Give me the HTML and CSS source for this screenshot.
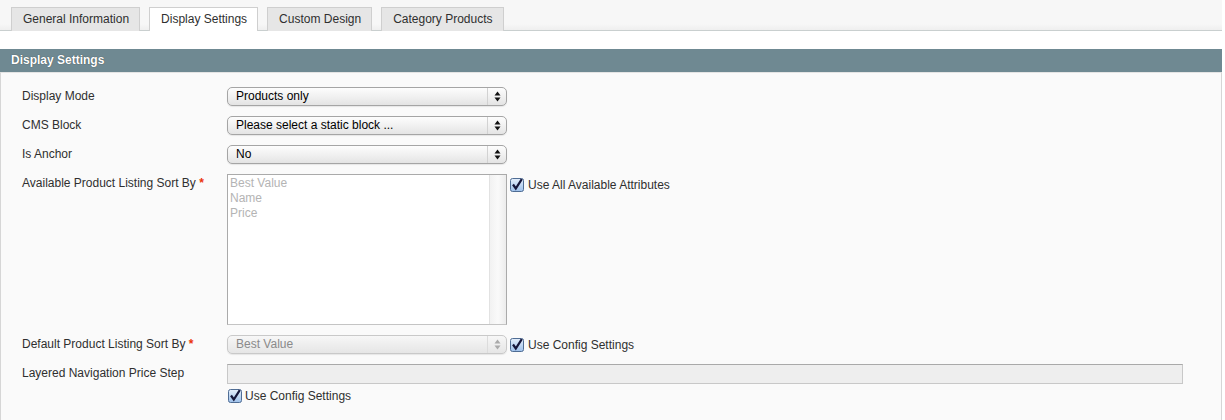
FILE: index.html
```html
<!DOCTYPE html>
<html lang="en">
<head>
    <meta charset="UTF-8">
    <title>Category - Display Settings</title>
    <link rel="stylesheet" href="styles.css">
</head>
<body>
    <div class="tab-bar">
        <ul class="tabs">
            <li class="tab">General Information</li>
            <li class="tab active">Display Settings</li>
            <li class="tab">Custom Design</li>
            <li class="tab">Category Products</li>
        </ul>
    </div>

    <div class="section-head">Display Settings</div>

    <div class="fieldset">
        <div class="form-row">
            <div class="label">Display Mode</div>
            <div class="value">
                <div class="select"><span class="select-text">Products only</span><span class="select-arrow"><svg width="7" height="11" viewBox="0 0 7 11"><path d="M3.5 0.5 L6.5 4.5 H0.5 Z M3.5 10.5 L6.5 6.5 H0.5 Z" fill="#111"/></svg></span></div>
            </div>
        </div>
        <div class="form-row">
            <div class="label">CMS Block</div>
            <div class="value">
                <div class="select"><span class="select-text">Please select a static block ...</span><span class="select-arrow"><svg width="7" height="11" viewBox="0 0 7 11"><path d="M3.5 0.5 L6.5 4.5 H0.5 Z M3.5 10.5 L6.5 6.5 H0.5 Z" fill="#111"/></svg></span></div>
            </div>
        </div>
        <div class="form-row">
            <div class="label">Is Anchor</div>
            <div class="value">
                <div class="select"><span class="select-text">No</span><span class="select-arrow"><svg width="7" height="11" viewBox="0 0 7 11"><path d="M3.5 0.5 L6.5 4.5 H0.5 Z M3.5 10.5 L6.5 6.5 H0.5 Z" fill="#111"/></svg></span></div>
            </div>
        </div>
        <div class="form-row">
            <div class="label">Available Product Listing Sort By <span class="required">*</span></div>
            <div class="value">
                <div class="multiselect">
                    <ul class="options">
                        <li>Best Value</li>
                        <li>Name</li>
                        <li>Price</li>
                    </ul>
                    <div class="scroll-track"></div>
                </div>
                <label class="check">
                    <svg class="checkbox" width="14" height="14" viewBox="0 0 14 14"><defs><linearGradient id="cb1" x1="0" y1="0" x2="0" y2="1"><stop offset="0" stop-color="#e4eefb"/><stop offset="1" stop-color="#9dc0ea"/></linearGradient></defs><rect x="0.5" y="0.5" width="13" height="13" rx="2" fill="url(#cb1)" stroke="#4f6d94"/><path d="M3 6.5 L5.8 10.5 L11.8 1.2" fill="none" stroke="#15163a" stroke-width="2.2"/></svg>
                    Use All Available Attributes
                </label>
            </div>
        </div>
        <div class="form-row">
            <div class="label">Default Product Listing Sort By <span class="required">*</span></div>
            <div class="value">
                <div class="select disabled"><span class="select-text">Best Value</span><span class="select-arrow"><svg width="7" height="11" viewBox="0 0 7 11"><path d="M3.5 0.5 L6.5 4.5 H0.5 Z M3.5 10.5 L6.5 6.5 H0.5 Z" fill="#aaa"/></svg></span></div>
                <label class="check">
                    <svg class="checkbox" width="14" height="14" viewBox="0 0 14 14"><defs><linearGradient id="cb2" x1="0" y1="0" x2="0" y2="1"><stop offset="0" stop-color="#e4eefb"/><stop offset="1" stop-color="#9dc0ea"/></linearGradient></defs><rect x="0.5" y="0.5" width="13" height="13" rx="2" fill="url(#cb2)" stroke="#4f6d94"/><path d="M3 6.5 L5.8 10.5 L11.8 1.2" fill="none" stroke="#15163a" stroke-width="2.2"/></svg>
                    Use Config Settings
                </label>
            </div>
        </div>
        <div class="form-row">
            <div class="label">Layered Navigation Price Step</div>
            <div class="value stacked">
                <div class="input-text"></div>
                <label class="check">
                    <svg class="checkbox" width="14" height="14" viewBox="0 0 14 14"><defs><linearGradient id="cb3" x1="0" y1="0" x2="0" y2="1"><stop offset="0" stop-color="#e4eefb"/><stop offset="1" stop-color="#9dc0ea"/></linearGradient></defs><rect x="0.5" y="0.5" width="13" height="13" rx="2" fill="url(#cb3)" stroke="#4f6d94"/><path d="M3 6.5 L5.8 10.5 L11.8 1.2" fill="none" stroke="#15163a" stroke-width="2.2"/></svg>
                    Use Config Settings
                </label>
            </div>
        </div>
    </div>
</body>
</html>
```

FILE: styles.css
```css
* {
    box-sizing: border-box;
    margin: 0;
    padding: 0;
}

body {
    font-family: "Liberation Sans", Arial, Helvetica, sans-serif;
    font-size: 12px;
    color: #2f2f2f;
    background: #fff;
    width: 1222px;
}

/* tabs */
.tab-bar {
    height: 31px;
    background: linear-gradient(#f7f7f7, #f7f7f7 80%, #efefef);
    border-bottom: 1px solid #c9cfcf;
    padding: 7px 0 0 11px;
}

.tabs {
    list-style: none;
    display: flex;
    gap: 9px;
}

.tab {
    height: 24px;
    line-height: 22px;
    padding: 0 10px 0 11px;
    background: #e6e6e6;
    border: 1px solid #cfcfcf;
    border-bottom: none;
    color: #2f2f2f;
}

.tab.active {
    background: #fff;
}

/* section header */
.section-head {
    margin-top: 18px;
    height: 23px;
    line-height: 22px;
    background: #6f8992;
    color: #fff;
    font-weight: bold;
    padding-left: 11px;
    text-shadow: 0 0 1px rgba(0, 0, 0, 0.6);
}

.fieldset {
    background: #fafafa;
    border: 1px solid #d6d6d6;
    border-top: 1px solid #e4e4e4;
    padding: 14px 0 20px 21px;
    height: 349px;
}

.form-row {
    display: grid;
    grid-template-columns: 205px 1fr;
    margin-bottom: 10px;
}

.label {
    line-height: 19px;
    color: #2f2f2f;
}

.required {
    color: #eb340a;
    font-weight: bold;
}

.value {
    display: flex;
    align-items: flex-start;
}

.value.stacked {
    flex-direction: column;
}

/* select boxes */
.select {
    width: 280px;
    height: 19px;
    display: flex;
    border: 1px solid #a5a5a5;
    border-radius: 5px;
    background: linear-gradient(#fdfdfd, #f1f1f1 50%, #e4e4e4);
    box-shadow: 0 1px 1px rgba(0, 0, 0, 0.08);
    color: #000;
}

.select-text {
    flex: 1;
    line-height: 17px;
    padding-left: 8px;
    border-right: 1px solid #d2d2d2;
}

.select-arrow {
    width: 18px;
    display: flex;
    align-items: center;
    justify-content: center;
}

.select.disabled {
    border-color: #c9c9c9;
    color: #8a8a8a;
    background: linear-gradient(#f7f7f7, #eeeeee 50%, #e6e6e6);
}

.select.disabled .select-text {
    border-right-color: #dcdcdc;
}

/* multiselect */
.multiselect {
    width: 280px;
    height: 151px;
    display: flex;
    background: #fff;
    border: 1px solid #aaa;
    border-bottom-color: #c4c4c4;
}

.options {
    list-style: none;
    flex: 1;
    padding: 1px 0 0 2px;
    color: #b4b4b4;
    line-height: 15px;
}

.scroll-track {
    width: 17px;
    border-left: 1px solid #e2e2e2;
    background: linear-gradient(90deg, #f2f2f2, #fafafa 50%, #ececec);
}

/* checkbox labels */
.check {
    display: flex;
    align-items: center;
    gap: 4px;
    height: 19px;
    padding-left: 3px;
    color: #2f2f2f;
}

.multiselect + .check {
    margin-top: 1px;
}

.value.stacked .check {
    margin-top: 2px;
    padding-left: 1px;
    gap: 3px;
}

/* text input */
.input-text {
    width: 956px;
    height: 20px;
    background: #eeeeee;
    border: 1px solid #c8c8c8;
    border-top-color: #a9a9a9;
}
```
